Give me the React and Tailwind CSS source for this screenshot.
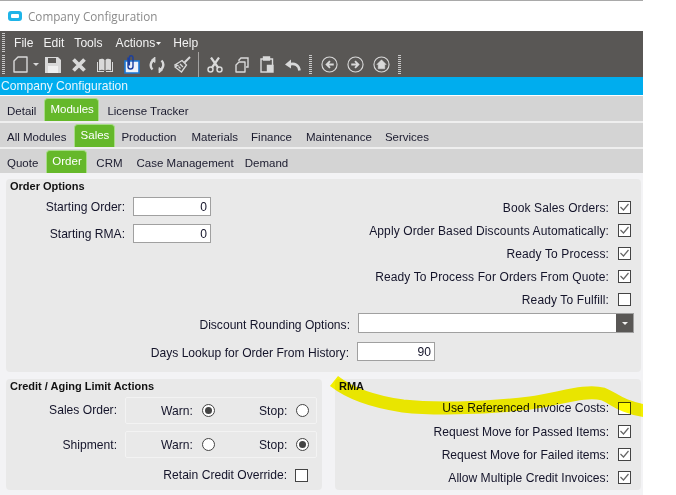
const checkPath = "M3 7l3 3 5-6";

function Check({ checked }) {
  return (
    <span className="flex h-[13px] w-[13px] shrink-0 items-center justify-center border border-[#444444] bg-white">
      {checked && (
        <svg width="13" height="13" viewBox="0 0 13 13" className="shrink-0">
          <path d={checkPath} transform="translate(-0.5 -1)" fill="none" stroke="#666666" strokeWidth="1.2" />
        </svg>
      )}
    </span>
  );
}

function Radio({ on }) {
  return (
    <span className="flex h-[13px] w-[13px] items-center justify-center rounded-full border border-[#444444] bg-white">
      {on && <span className="h-[7px] w-[7px] rounded-full bg-[#444444]" />}
    </span>
  );
}

function CheckRow({ label, checked, className = "h-[23px]" }) {
  return (
    <div className={`flex items-center justify-end gap-[9px] ${className}`}>
      <span>{label}</span>
      <Check checked={checked} />
    </div>
  );
}

function Tab({ children }) {
  return (
    <div className="flex h-[23px] items-start justify-center rounded-t-[4px] border border-b-0 border-[#a8dc88] bg-[#65b82a] px-[5px] pt-[3px] text-white">
      {children}
    </div>
  );
}

function TabRow({ children, className = "h-[24px]" }) {
  return <div className={`flex items-end bg-[#d4d4d4] pb-0 text-[11.5px] text-[#1b1b2e] ${className}`}>{children}</div>;
}

// plain tab label, sits a little lower than the active one
function TabText({ className = "", children }) {
  return <span className={`mb-[3px] ${className}`}>{children}</span>;
}

function Grip({ className = "" }) {
  return <span className={`block h-[20px] w-[3px] shrink-0 bg-[repeating-linear-gradient(to_bottom,#c8c8c8_0,#c8c8c8_1px,transparent_1px,transparent_2px)] ${className}`} />;
}

function CircleIcon({ children }) {
  return (
    <svg width="17" height="17" viewBox="0 0 18 18" fill="none" stroke="#d9d9d9" className="shrink-0">
      <circle cx="9" cy="9" r="8" strokeWidth="1.2" />
      {children}
    </svg>
  );
}

function Toolbar() {
  const ink = "#d9d9d9";
  return (
    <div className="flex h-[23px] items-center bg-[#595755] pb-[2px] pl-[2px]">
      <Grip />
      <svg width="15" height="17" viewBox="0 0 15 17" fill="none" stroke={ink} strokeWidth="1.4" className="ml-[8px]">
        <path d="M5 1h9v15H1V5z" strokeLinejoin="round" />
      </svg>
      <svg width="6" height="4" viewBox="0 0 6 4" fill={ink} className="ml-[5px]"><path d="M0 0h6L3 3z" /></svg>
      <svg width="16" height="16" viewBox="0 0 16 16" fill={ink} className="ml-[6px]">
        <path d="M0 0h13l3 3v13H0z" />
        <path d="M3 1h8v5H3z" fill="#595755" />
        <path d="M3 9h10v7H3z" fill="#efefef" />
      </svg>
      <svg width="14" height="14" viewBox="0 0 14 14" stroke={ink} strokeWidth="3.8" className="ml-[11px]">
        <path d="M1.500 1.500l11 11M12.500 1.500l-11 11" />
      </svg>
      <svg width="16" height="14" viewBox="0 0 16 14" fill={ink} className="ml-[11px]">
        <path d="M2 1.500c2-1 4.500-1 5.500.5v10.500c-1.500-1-3.500-1-5.500 0z" />
        <path d="M14 1.500c-2-1-4.500-1-5.500.5v10.500c1.500-1 3.500-1 5.500 0z" />
        <path d="M0 4h1v9h6v1H0zM16 4h-1v9H9v1h7z" />
      </svg>
      <svg width="16" height="19" viewBox="0 0 16 19" fill="none" className="ml-[11px]">
        <path d="M1 6h14v12H1z" fill="#eef3fa" stroke="#1b78d8" strokeWidth="1.6" />
        <path d="M4 2.500v9a2.500 2.500 0 0 0 5 0v-9a1.800 1.800 0 0 0-3.600 0v8" stroke="#1a3fa0" strokeWidth="1.4" />
      </svg>
      <svg width="16" height="16" viewBox="0 0 16 16" fill="none" stroke={ink} strokeWidth="2.4" className="ml-[9px]">
        <path d="M3.500 12.500A6 6 0 0 1 6 2.500M12.500 3.500A6 6 0 0 1 10 13.500" />
        <path d="M6 0v5.500L2.500 3zM10 16v-5.500l3.500 2.500z" fill={ink} strokeWidth="0.8" />
      </svg>
      <svg width="17" height="17" viewBox="0 0 17 17" fill="none" stroke={ink} strokeWidth="1.3" className="ml-[9px]">
        <path d="M16 1l-5.500 5.500" strokeWidth="2" />
        <path d="M8 4.500l4.500 4.500-5 7-6.500-5 2.500-1.500L1 9z" />
        <path d="M6 8l3 3M4.500 10.500l2 2" />
      </svg>
      <span className="ml-[7px] h-[25px] w-px bg-[#a5a3a1]" />
      <svg width="16" height="16" viewBox="0 0 16 16" fill="none" stroke={ink} className="ml-[8px]">
        <circle cx="3.500" cy="12.500" r="2.500" strokeWidth="1.500" />
        <circle cx="12.500" cy="12.500" r="2.500" strokeWidth="1.500" />
        <path d="M5 10.500L12 .5M11 10.500L4 .5" strokeWidth="2.200" />
      </svg>
      <svg width="14" height="16" viewBox="0 0 14 16" fill="none" stroke={ink} strokeWidth="1.4" className="ml-[12px]">
        <path d="M4 4V3l2-2h7v9h-2" />
        <path d="M1 8l3-3h6v10H1z" strokeLinejoin="round" />
      </svg>
      <svg width="14" height="17" viewBox="0 0 14 17" fill="none" stroke={ink} strokeWidth="1.4" className="ml-[11px]">
        <path d="M4 3H1v13h6M10 3h2.500v6" />
        <path d="M3.500 1h6v3h-6z" fill={ink} />
        <path d="M7.500 9.500H13V16H7.500z" fill={ink} />
      </svg>
      <svg width="16" height="13" viewBox="0 0 16 13" fill="none" className="ml-[11px]">
        <path d="M14.500 12.500C14 7.500 10 4.500 4 6.500" stroke={ink} strokeWidth="2.600" />
        <path d="M6 1.500L0 6.500l6 4z" fill={ink} />
      </svg>
      <Grip className="ml-[8px]" />
      <span className="ml-[9px] flex items-center gap-[9px]">
        <CircleIcon><path d="M13.500 9H6M9.500 5.500L6 9l3.500 3.500" strokeWidth="2" /></CircleIcon>
        <CircleIcon><path d="M4.500 9H12M8.500 5.500L12 9l-3.500 3.500" strokeWidth="2" /></CircleIcon>
        <CircleIcon><path d="M9 4L4 9h1.500v4.500h7V9H14z" fill="#d9d9d9" strokeWidth="0.5" /></CircleIcon>
      </span>
      <Grip className="ml-[8px]" />
    </div>
  );
}

function RadioBox({ warn }) {
  return (
    <div className="ml-[8px] flex h-[27px] w-[192px] items-center rounded-[2px] border border-[#f3f3f3] pl-[35px]">
      <span className="w-[32px]">Warn:</span>
      <span className="ml-[9px]"><Radio on={warn} /></span>
      <span className="ml-[44px] w-[28px]">Stop:</span>
      <span className="ml-[9px]"><Radio on={!warn} /></span>
    </div>
  );
}

export default function App() {
  return (
    <div className="relative h-[495px] w-[676px] overflow-hidden bg-white font-['Liberation_Sans',Arial,sans-serif] text-[12.1px] leading-[14px] text-[#14142a]">
      <div className="w-[643px]">
        <div className="h-px bg-[#a9a9a9]" />
        {/* window title */}
        <div className="flex h-[30px] items-center gap-[6px] pb-[1px] pl-[8px] font-['Open_Sans',sans-serif] text-[11.7px] text-[#8a8a8a]">
          <span className="flex h-[10px] w-[14px] items-center justify-center rounded-[3px] bg-[#1eb4e8]">
            <span className="h-[4px] w-[8px] rounded-[1px] bg-white" />
          </span>
          <span>Company Configuration</span>
        </div>
        {/* menu */}
        <div className="flex h-[23px] items-center bg-[#595755] pl-[2px] pt-[1px] text-[#f2f2f2]">
          <Grip />
          <span className="ml-[9px]">File</span>
          <span className="ml-[10px]">Edit</span>
          <span className="ml-[10px]">Tools</span>
          <span className="ml-[13px] flex items-center gap-[1px]">
            Actions
            <svg width="5" height="3" viewBox="0 0 5 3" fill="#f2f2f2"><path d="M0 0h5L2.500 3z" /></svg>
          </span>
          <span className="ml-[12px]">Help</span>
        </div>
        <Toolbar />
        <div className="flex h-[18px] items-center bg-[#00adee] pl-[1px] text-[#e8f6fd]">Company Configuration</div>
        <div className="h-px bg-white" />
        {/* tabs */}
        <TabRow className="h-[25px]">
          <TabText className="ml-[7px]">Detail</TabText>
          <span className="ml-[8px]"><Tab><span className="w-[43px] text-center">Modules</span></Tab></span>
          <TabText className="ml-[8px]">License Tracker</TabText>
        </TabRow>
        <div className="h-[2px] bg-[#efefef]" />
        <TabRow>
          <TabText className="ml-[7px]">All Modules</TabText>
          <span className="ml-[8px]"><Tab><span className="w-[29px] text-center">Sales</span></Tab></span>
          <TabText className="ml-[6px]">Production</TabText>
          <TabText className="ml-[15px]">Materials</TabText>
          <TabText className="ml-[13px]">Finance</TabText>
          <TabText className="ml-[14px]">Maintenance</TabText>
          <TabText className="ml-[13px]">Services</TabText>
        </TabRow>
        <div className="h-[2px] bg-[#efefef]" />
        <TabRow>
          <TabText className="ml-[7px]">Quote</TabText>
          <span className="ml-[8px]"><Tab><span className="w-[29px] text-center">Order</span></Tab></span>
          <TabText className="ml-[9px]">CRM</TabText>
          <TabText className="ml-[14px]">Case Management</TabText>
          <TabText className="ml-[11px]">Demand</TabText>
        </TabRow>
        {/* content */}
        <div className="h-[322px] bg-[#f3f3f5] pl-[6px] pr-[2px] pt-[6px]">
          <section className="h-[193px] w-[635px] rounded-[4px] bg-[#e9e9e9] px-[4px]">
            <h2 className="h-[14px] text-[11px] font-bold text-[#111111]">Order Options</h2>
            <div className="flex justify-between pr-[6px]">
              <div className="flex flex-col gap-[8px] pt-[4px]">
                <div className="flex items-center justify-end gap-[8px]">
                  <span className="w-[115px] text-right">Starting Order:</span>
                  <input readOnly value="0" className="h-[19px] w-[78px] border border-[#a0a0a0] bg-white px-[3px] text-right outline-none" />
                </div>
                <div className="flex items-center justify-end gap-[8px]">
                  <span className="w-[115px] text-right">Starting RMA:</span>
                  <input readOnly value="0" className="h-[19px] w-[78px] border border-[#a0a0a0] bg-white px-[3px] text-right outline-none" />
                </div>
              </div>
              <div className="pt-[3px] text-[12px] tracking-[0.12px]">
                <CheckRow label="Book Sales Orders:" checked />
                <CheckRow label="Apply Order Based Discounts Automatically:" checked />
                <CheckRow label="Ready To Process:" checked />
                <CheckRow label="Ready To Process For Orders From Quote:" checked />
                <CheckRow label="Ready To Fulfill:" />
              </div>
            </div>
            <div className="mt-[2px] flex items-center">
              <span className="w-[340px] translate-y-[2px] text-right">Discount Rounding Options:</span>
              <div className="ml-[8px] flex h-[20px] w-[276px] justify-end border border-[#a0a0a0] bg-white">
                <span className="flex w-[17px] items-center justify-center bg-[#595755]">
                  <svg width="6" height="3" viewBox="0 0 6 3" fill="#f2f2f2"><path d="M0 0h6L3 3z" /></svg>
                </span>
              </div>
            </div>
            <div className="mt-[9px] flex items-center">
              <span className="w-[339px] translate-y-[1px] text-right">Days Lookup for Order From History:</span>
              <input readOnly value="90" className="ml-[8px] h-[19px] w-[78px] border border-[#a0a0a0] bg-white px-[3px] text-right outline-none" />
            </div>
          </section>
          <div className="mt-[7px] flex justify-between">
            <section className="h-[111px] w-[316px] rounded-[4px] bg-[#e9e9e9] px-[4px]">
              <h2 className="h-[14px] text-[11px] font-bold text-[#111111]">Credit / Aging Limit Actions</h2>
              <div className="mt-[4px] flex items-center">
                <span className="w-[107px] -translate-y-[1px] text-right">Sales Order:</span>
                <RadioBox warn />
              </div>
              <div className="mt-[7px] flex items-center">
                <span className="w-[107px] text-right">Shipment:</span>
                <RadioBox />
              </div>
              <div className="mt-[10px] flex items-center justify-end gap-[8px] pr-[10px]">
                <span>Retain Credit Override:</span>
                <Check />
              </div>
            </section>
            <section className="h-[111px] w-[306px] rounded-[4px] bg-[#e9e9e9] px-[4px]">
              <h2 className="h-[14px] text-[11px] font-bold text-[#111111]">RMA</h2>
              <div className="pr-[6px]">
                <CheckRow label="Use Referenced Invoice Costs:" className="mt-[3px] h-[24px]" />
                <CheckRow label="Request Move for Passed Items:" checked />
                <CheckRow label="Request Move for Failed items:" checked />
                <CheckRow label="Allow Multiple Credit Invoices:" checked />
              </div>
            </section>
          </div>
        </div>
      </div>
      {/* marker scribble over the RMA group */}
      <svg width="643" height="495" viewBox="0 0 643 495" className="absolute left-0 top-0 mix-blend-multiply" fill="none">
        <path
          d="M334 381C348 392 368 401 403 406C430 409 480 409 530 403C560 399 585 389 603 394C614 398 620 407 646 411"
          stroke="#fffb00"
          strokeWidth="13"
        />
      </svg>
    </div>
  );
}
